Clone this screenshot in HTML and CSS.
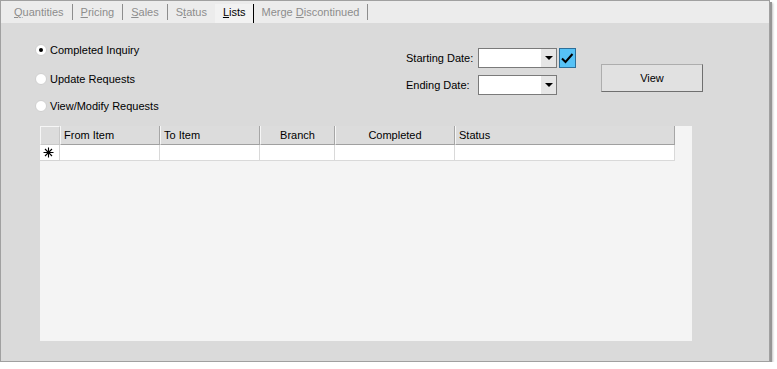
FILE: index.html
```html
<!DOCTYPE html>
<html>
<head>
    <title>Lists</title>
    <meta charset="UTF-8">
    <link rel="stylesheet" href="styles.css">
</head>
<body>
    <div class="window">
        <div class="tabs">
            <div class="tab"><u>Q</u>uantities</div>
            <div class="tab"><u>P</u>ricing</div>
            <div class="tab"><u>S</u>ales</div>
            <div class="tab tab-plain">S<u>t</u>atus</div>
            <div class="tab active"><u>L</u>ists</div>
            <div class="tab">Merge <u>D</u>iscontinued</div>
        </div>

        <div class="content">
            <div class="top">
                <div class="options">
                    <label class="radio first"><span class="dot checked"></span>Completed Inquiry</label>
                    <label class="radio second"><span class="dot"></span>Update Requests</label>
                    <label class="radio third"><span class="dot"></span>View/Modify Requests</label>
                </div>

                <div class="dates">
                    <div class="date-row">
                        <span class="date-label">Starting Date:</span>
                        <div class="picker">
                            <div class="picker-value"></div>
                            <div class="picker-btn"><span class="arrow"></span></div>
                        </div>
                        <div class="check">
                            <svg width="15" height="14" viewBox="0 0 15 14">
                                <path d="M2 7.5 L5.5 11 L12.5 3" fill="none" stroke="#000" stroke-width="2"/>
                            </svg>
                        </div>
                    </div>
                    <div class="date-row second-date">
                        <span class="date-label">Ending Date:</span>
                        <div class="picker">
                            <div class="picker-value"></div>
                            <div class="picker-btn"><span class="arrow"></span></div>
                        </div>
                    </div>
                </div>

                <button class="view-btn">View</button>
            </div>

            <div class="grid">
                <div class="grid-table">
                    <div class="hcell corner"></div>
                    <div class="hcell">From Item</div>
                    <div class="hcell">To Item</div>
                    <div class="hcell center">Branch</div>
                    <div class="hcell center">Completed</div>
                    <div class="hcell">Status</div>

                    <div class="rowhead">
                        <svg width="11" height="11" viewBox="0 0 11 11">
                            <path d="M5.5 0.5 V10.5 M0.5 5.5 H10.5 M2 2 L9 9 M9 2 L2 9" stroke="#000" stroke-width="1.1" fill="none"/>
                        </svg>
                    </div>
                    <div class="cell"></div>
                    <div class="cell"></div>
                    <div class="cell"></div>
                    <div class="cell"></div>
                    <div class="cell"></div>
                </div>
            </div>
        </div>
    </div>
</body>
</html>
```

FILE: styles.css
```css
:root {
    --bg-form: #dadada;
    --bg-tabs: #ececec;
    --tab-muted: #8d8d8d;
    --border-dark: #7a7a7a;
}

body {
    margin: 0;
    background: #ffffff;
    font-family: "Liberation Sans", Arial, sans-serif;
    font-size: 11px;
    color: #000;
}

.window {
    width: 770px;
    height: 362px;
    box-sizing: border-box;
    border: 1px solid #a0a0a0;
    background: var(--bg-form);
    display: flex;
    flex-direction: column;
    box-shadow: 2px 2px 0 #969696, 3px 3px 2px #c4c4c4;
}

/* tab strip */
.tabs {
    height: 22px;
    display: flex;
    background: var(--bg-tabs);
    padding-left: 5px;
}

.tab {
    margin-top: 3px;
    height: 16px;
    line-height: 16px;
    padding: 0 8px;
    border-right: 1px solid var(--tab-muted);
    color: var(--tab-muted);
}

.tab-plain {
    border-right: none;
}

.tab.active {
    height: 19px;
    color: #000;
    background: #f2f2f2;
    border-right-color: #000;
    padding: 0 7px 0 8px;
}

/* form content */
.content {
    flex: 1;
    display: flex;
    flex-direction: column;
}

.top {
    height: 103px;
    display: flex;
    padding-left: 34px;
}

.options {
    width: 371px;
    display: flex;
    flex-direction: column;
}

.radio {
    height: 20px;
    display: flex;
    align-items: center;
    gap: 3px;
}

.radio.first { margin-top: 17px; }
.radio.second { margin-top: 9px; }
.radio.third { margin-top: 7px; }

.dot {
    width: 10px;
    height: 10px;
    border-radius: 50%;
    background: #fff;
    border: 1px solid #cfcfcf;
    display: flex;
    align-items: center;
    justify-content: center;
}

.dot.checked::before {
    content: "";
    width: 4px;
    height: 4px;
    border-radius: 50%;
    background: #000;
}

.dates {
    display: flex;
    flex-direction: column;
}

.date-row {
    display: flex;
    align-items: center;
    margin-top: 25px;
    height: 20px;
}

.date-row.second-date {
    margin-top: 7px;
}

.date-label {
    width: 72px;
}

.picker {
    width: 79px;
    height: 20px;
    box-sizing: border-box;
    border: 1px solid var(--border-dark);
    display: flex;
    background: #fff;
}

.picker-value {
    flex: 1;
}

.picker-btn {
    width: 15px;
    background: #e6e6e6;
    display: flex;
    align-items: center;
    justify-content: center;
}

.arrow {
    width: 0;
    height: 0;
    border-left: 4px solid transparent;
    border-right: 4px solid transparent;
    border-top: 4px solid #000;
}

.check {
    width: 17px;
    height: 20px;
    margin-left: 2px;
    box-sizing: border-box;
    border: 1px solid #2c6f9a;
    background: #56c2f6;
    display: flex;
    align-items: center;
    justify-content: center;
}

.view-btn {
    margin: 41px 0 0 25px;
    width: 102px;
    height: 28px;
    background: #e1e1e1;
    border: 1px solid #adadad;
    border-right-color: #6f6f6f;
    border-bottom-color: #6f6f6f;
    font-family: "Liberation Sans", Arial, sans-serif;
    font-size: 11px;
    color: #000;
    padding: 0;
}

/* data grid */
.grid {
    margin-left: 39px;
    width: 652px;
    height: 215px;
    background: #f4f4f4;
}

.grid-table {
    display: grid;
    grid-template-columns: 20px 100px 100px 75px 120px 220px;
    grid-template-rows: 19px 16px;
}

.hcell {
    box-sizing: border-box;
    background: #dcdcdc;
    border-left: 1px solid #f6f6f6;
    border-right: 1px solid #a6a6a6;
    border-bottom: 1px solid #a0a0a0;
    padding-left: 3px;
    line-height: 19px;
    white-space: nowrap;
}

.hcell.center {
    text-align: center;
    padding-left: 0;
}

.hcell.corner {
    border-top: 1px solid #f6f6f6;
    border-left: 1px solid #f6f6f6;
    border-right-color: #c8c8c8;
    border-bottom-color: #c8c8c8;
}

.rowhead {
    background: #fff;
    border-right: 1px solid #d4d4d4;
    border-bottom: 1px solid #d4d4d4;
    box-sizing: border-box;
    display: flex;
    align-items: center;
    padding-left: 3px;
}

.cell {
    background: #fff;
    box-sizing: border-box;
    border-right: 1px solid #d9d9d9;
    border-bottom: 1px solid #d9d9d9;
}
```
